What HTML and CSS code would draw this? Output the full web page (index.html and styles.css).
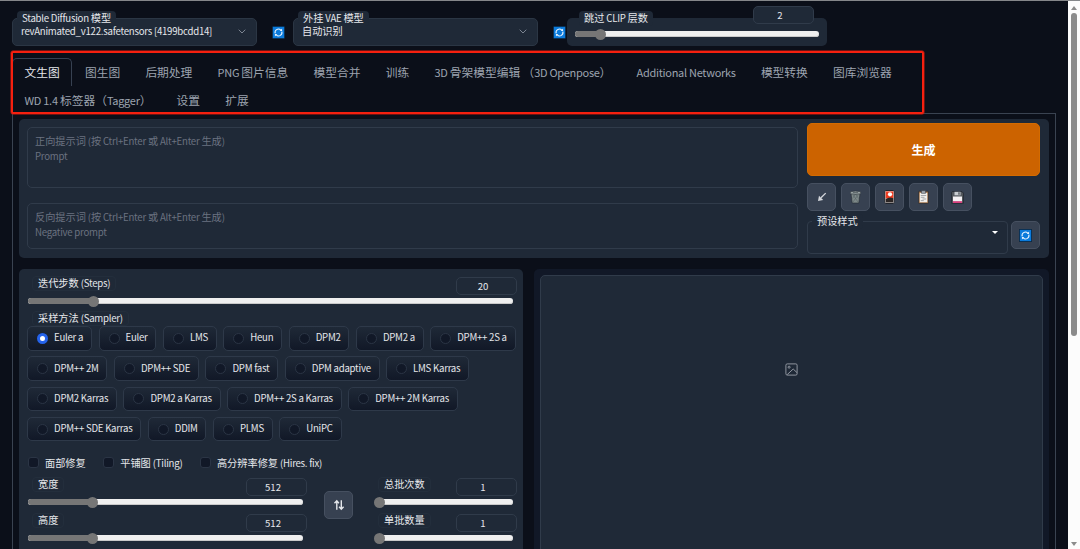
FILE: index.html
```html
<!DOCTYPE html>
<html lang="zh-CN">
<head>
<meta charset="utf-8">
<title>Stable Diffusion</title>
<link rel="stylesheet" href="styles.css">
</head>
<body>
<svg class="defs" width="0" height="0">
  <symbol id="sync" viewBox="0 0 13 13">
    <rect width="13" height="13" rx=".8" fill="#0a2136"/>
    <rect x=".8" y=".8" width="11.4" height="11.4" fill="#0b7bdc"/>
    <path d="M3.2 7.4A3.4 3.4 0 0 1 8.7 3.9M9.8 5.6A3.4 3.4 0 0 1 4.3 9.1" fill="none" stroke="#e9f5ff" stroke-width="1.1"/>
    <path d="M7.6 5.1h2.5V2.6zM5.4 7.9H2.9v2.5z" fill="#e9f5ff"/>
  </symbol>
  <symbol id="chev" viewBox="0 0 8 5"><path d="M.7.7 4 4 7.300.7" fill="none" stroke="#7d8592" stroke-width="1"/></symbol>
</svg>
<div class="app">
  <header class="quick">
    <div class="select">
      <span class="tag"><b>Stable Diffusion </b>模型</span>
      <span class="value"><b>revAnimated_v122.safetensors [4199bcdd14]</b></span>
      <svg class="chev"><use href="#chev"/></svg>
    </div>
    <svg class="sync"><use href="#sync"/></svg>
    <div class="select">
      <span class="tag">外挂<b> VAE </b>模型</span>
      <span class="value">自动识别</span>
      <svg class="chev"><use href="#chev"/></svg>
    </div>
    <svg class="sync"><use href="#sync"/></svg>
    <div class="clip">
      <span class="tag">跳过<b> CLIP </b>层数</span>
      <span class="num">2</span>
      <div class="slider"><i class="fill" style="width:26px"></i></div>
    </div>
  </header>

  <nav class="tabs">
    <a class="tab active">文生图</a><a class="tab">图生图</a><a class="tab">后期处理</a><a class="tab"><b>PNG </b>图片信息</a><a class="tab">模型合并</a><a class="tab">训练</a><a class="tab"><b>3D </b>骨架模型编辑<b> </b>（<b>3D Openpose</b>）</a><a class="tab"><b>Additional Networks</b></a><a class="tab">模型转换</a><a class="tab">图库浏览器</a>
    <a class="tab"><b>WD 1.4 </b>标签器（<b>Tagger</b>）</a><a class="tab">设置</a><a class="tab">扩展</a>
    <div class="highlight"></div>
  </nav>

  <main class="page">
    <section class="top">
      <div class="prompts">
        <div class="area pos">正向提示词<b> (</b>按<b> Ctrl+Enter </b>或<b> Alt+Enter </b>生成<b>)</b><br><b>Prompt</b></div>
        <div class="area neg">反向提示词<b> (</b>按<b> Ctrl+Enter </b>或<b> Alt+Enter </b>生成<b>)</b><br><b>Negative prompt</b></div>
      </div>
      <div class="actions">
        <button class="generate">生成</button>
        <div class="tools">
          <button class="tool"><svg width="12" height="12" viewBox="0 0 12 12"><path d="M9.700 2.100 5 6.800" stroke="#d4d7dc" stroke-width="1.300"/><path d="M2 10 3 4.800 7.200 9z" fill="#d4d7dc"/></svg></button>
          <button class="tool"><svg width="13" height="14" viewBox="0 0 13 14"><path d="M2 3.500h9L9.800 13H3.200z" fill="#7d8888" stroke="#252c32" stroke-width=".6"/><path d="M4 5l5 7M6.500 4l3 4.500M9 5l-5 7M6.500 4l-3 4.500" stroke="#566164" stroke-width=".6"/><ellipse cx="6.500" cy="2.700" rx="5.500" ry="1.600" fill="#98a2a2" stroke="#252c32" stroke-width=".6"/><path d="M4 2.600h5" stroke="#4d5759" stroke-width=".8"/></svg></button>
          <button class="tool"><svg width="11" height="14" viewBox="0 0 11 14"><rect x=".8" y=".5" width="9.400" height="13" rx="1.200" fill="#f1e8e4" stroke="#20252d"/><path d="M1.700 1.400h7.600v7H1.700z" fill="#ef3b20"/><circle cx="6" cy="4.300" r="2.100" fill="#fff"/><path d="M1.700 9Q5.500 6.200 9.300 8.300v4.300H1.700z" fill="#2b2524"/></svg></button>
          <button class="tool"><svg width="11" height="14" viewBox="0 0 11 14"><rect x=".5" y="1.200" width="10" height="12.300" rx=".8" fill="#9b6d45" stroke="#242a32" stroke-width=".7"/><path d="M1.700 2.800h7.600v9.500H1.700z" fill="#f1efeb"/><path d="M3.500.6h4v2.800h-4z" fill="#9da5ac" stroke="#343a42" stroke-width=".5"/><path d="M2.800 5.500h5.400M2.800 7.300h3.700M4.500 9h3.700M2.800 10.600h3" stroke="#92969b" stroke-width=".8"/></svg></button>
          <button class="tool"><svg width="13" height="13" viewBox="0 0 13 13"><path d="M1.300.6h9.600l1.500 1.500v10.300H.6V1.300z" fill="#55595e" stroke="#20252d" stroke-width=".8"/><path d="M3.500.8h6v3.500h-6z" fill="#c9cdd1"/><path d="M7.400 1.300h1.200v2.400H7.400z" fill="#44484d"/><path d="M2 5.500h9v5H2z" fill="#f5f2f4"/><path d="M2 10.300h9v1.600H2z" fill="#ea3e83"/></svg></button>
        </div>
        <div class="styles">
          <div class="preset"><span class="tag">预设样式</span><i class="caret"></i></div>
          <button class="tool"><svg class="sync"><use href="#sync"/></svg></button>
        </div>
      </div>
    </section>

    <div class="columns">
      <section class="settings">
        <div class="field steps">
          <div class="head"><span class="label">迭代步数<b> (Steps)</b></span><span class="num">20</span></div>
          <div class="slider"><i class="fill" style="width:66px"></i></div>
        </div>
        <div class="sampler"><span class="label">采样方法<b> (Sampler)</b></span></div>
        <div class="radios">
          <div class="row"><label class="radio on"><i></i><b>Euler a</b></label><label class="radio"><i></i><b>Euler</b></label><label class="radio"><i></i><b>LMS</b></label><label class="radio"><i></i><b>Heun</b></label><label class="radio"><i></i><b>DPM2</b></label><label class="radio"><i></i><b>DPM2 a</b></label><label class="radio"><i></i><b>DPM++ 2S a</b></label></div>
          <div class="row"><label class="radio"><i></i><b>DPM++ 2M</b></label><label class="radio"><i></i><b>DPM++ SDE</b></label><label class="radio"><i></i><b>DPM fast</b></label><label class="radio"><i></i><b>DPM adaptive</b></label><label class="radio"><i></i><b>LMS Karras</b></label></div>
          <div class="row"><label class="radio"><i></i><b>DPM2 Karras</b></label><label class="radio"><i></i><b>DPM2 a Karras</b></label><label class="radio"><i></i><b>DPM++ 2S a Karras</b></label><label class="radio"><i></i><b>DPM++ 2M Karras</b></label></div>
          <div class="row"><label class="radio"><i></i><b>DPM++ SDE Karras</b></label><label class="radio"><i></i><b>DDIM</b></label><label class="radio"><i></i><b>PLMS</b></label><label class="radio"><i></i><b>UniPC</b></label></div>
        </div>
        <div class="checks"><label><i></i>面部修复</label><label><i></i><span>平铺图<b> (Tiling)</b></span></label><label><i></i><span>高分辨率修复<b> (Hires. fix)</b></span></label></div>
        <div class="dims">
          <div class="wide">
            <div class="field"><div class="head"><span class="label">宽度</span><span class="num">512</span></div><div class="slider"><i class="fill" style="width:65px"></i></div></div>
            <div class="field"><div class="head"><span class="label">高度</span><span class="num">512</span></div><div class="slider"><i class="fill" style="width:65px"></i></div></div>
          </div>
          <button class="tool swap"><svg width="12" height="12" viewBox="0 0 12 12" fill="none" stroke="#e5e7eb" stroke-width="1.400"><path d="M3.800 10.700V2M1.500 4.300l2.300-2.500 2.100 2.500M8.300 1.300V10M6.100 7.700l2.200 2.500 2.300-2.500"/></svg></button>
          <div class="narrow">
            <div class="field"><div class="head"><span class="label">总批次数</span><span class="num">1</span></div><div class="slider"><i class="fill" style="width:5px"></i></div></div>
            <div class="field"><div class="head"><span class="label">单批数量</span><span class="num">1</span></div><div class="slider"><i class="fill" style="width:5px"></i></div></div>
          </div>
        </div>
      </section>
      <section class="output">
        <div class="gallery"><svg width="13" height="13" viewBox="0 0 13 13" fill="none" stroke="#8f959f" stroke-width="1"><rect x=".9" y=".9" width="11.200" height="11.200" rx="1.300"/><circle cx="4.100" cy="4.200" r="1"/><path d="M2.200 11.600 8.200 6l3.900 3.700"/></svg></div>
      </section>
    </div>
  </main>
</div>
<aside class="scrollbar"><i class="up"></i><i class="thumb"></i><i class="down"></i></aside>
</body>
</html>
```
FILE: styles.css
```css
* { box-sizing: border-box; }
body {
  margin: 0;
  width: 1080px;
  height: 549px;
  overflow: hidden;
  display: flex;
  background: #0b0f19;
  border-top: 1px solid #85878a;
  font: 10.2px/14px "Noto Sans CJK SC", sans-serif;
  color: #e5e7eb;
}
button { padding: 0; font: inherit; color: inherit; }
/* Latin runs are set slightly smaller and tighter than the Chinese text around them */
b { font-size: .945em; letter-spacing: -.025em; font-weight: inherit; line-height: 1; white-space: pre; }
.defs { position: absolute; }
.app { width: 1068px; height: 548px; padding-left: 12px; overflow: hidden; }

.quick { display: flex; height: 50px; padding-top: 17px; }
.select {
  position: relative;
  width: 245px;
  height: 28px;
  padding: 5px 10px 0 8px;
  display: flex;
  justify-content: space-between;
  background: #1f2937;
  border: 1px solid #2b3644;
  border-radius: 5px;
}
.value { line-height: 14px; white-space: nowrap; }
.chev { width: 8px; height: 5px; margin-top: 5px; }
.sync { width: 13px; height: 13px; flex: none; }
.quick > .sync { margin: 8px 8px 0 15px; }
.quick > .sync:nth-of-type(2) { margin-right: 1px; }
.tag {
  position: absolute;
  left: 4px;
  top: -8px;
  height: 15px;
  padding: 0 5px;
  line-height: 14px;
  white-space: nowrap;
  background: #1f2937;
  border-radius: 4px;
}
.clip {
  position: relative;
  width: 260px;
  height: 28px;
  padding: 13px 8px 0;
  background: #1f2937;
  border-radius: 5px;
}
.clip .tag { left: 12px; top: -7px; }
.clip .num { position: absolute; left: 186px; top: -12px; }
.num {
  width: 61px;
  height: 18px;
  padding-right: 7px;
  line-height: 16px;
  text-align: center;
  font-size: 9.600px;
  background: #1f2937;
  border: 1px solid #303b4a;
  border-radius: 5px;
}
.slider { height: 6px; border-radius: 3px; background: #efefef; box-shadow: inset 0 -1px #c9c9c9; }
.fill { position: relative; display: block; height: 6px; border-radius: 3px; background: #767676; }
.fill::after {
  content: "";
  position: absolute;
  right: -5px;
  top: -2.500px;
  width: 11px;
  height: 11px;
  border-radius: 50%;
  background: #767676;
}

.tabs {
  position: relative;
  display: flex;
  flex-wrap: wrap;
  align-content: flex-start;
  width: 911px;
  height: 62px;
  padding-top: 7px;
}
.tab {
  height: 27.500px;
  padding: 0 11.700px 0 11.500px;
  border: 1px solid transparent;
  border-bottom: 0;
  font-size: 11.75px;
  line-height: 25px;
  color: #9ca3af;
  white-space: nowrap;
}
.tab b { font-size: .935em; }
.tab.active { color: #e5e7eb; border-color: #374151; border-radius: 5px 5px 0 0; }
.highlight {
  position: absolute;
  left: -1px;
  top: 0;
  width: 913px;
  height: 63px;
  border: 2px solid #f6200f;
  border-radius: 2px;
  box-shadow: 0 0 0 .5px #c41a10;
}

.page { width: 1044px; height: 440px; padding: 5px 6px 0; border: 1px solid #3a4351; border-bottom: 0; }
.top { display: flex; gap: 9px; height: 139px; padding: 4px 9px 0 8px; background: #1f2937; border-radius: 5px; }
.prompts { width: 771px; padding-top: 4px; display: flex; flex-direction: column; gap: 15px; }
.area { padding: 5px 7px; border: 1px solid #303b4a; border-radius: 5px; line-height: 15px; color: #6b7280; }
.pos { height: 61px; }
.neg { height: 46px; }
.actions { width: 233px; }
.generate {
  display: block;
  width: 233px;
  height: 53px;
  border: 1px solid #d46b00;
  border-radius: 5px;
  background: #cc6300;
  font-size: 12px;
  font-weight: 700;
  color: #fff;
}
.tools { display: flex; gap: 5px; margin: 7px 0 10px; }
.tool {
  width: 29px;
  height: 28px;
  flex: none;
  display: flex;
  align-items: center;
  justify-content: center;
  background: #374151;
  border: 1px solid #465060;
  border-radius: 5px;
}
.styles { display: flex; gap: 3px; }
.preset { position: relative; width: 201px; height: 33px; border: 1px solid #303b4a; border-radius: 4px; }
.caret {
  position: absolute;
  right: 9px;
  top: 9px;
  border: 3px solid transparent;
  border-top-color: #fff;
  border-bottom: 0;
}

.columns { display: flex; gap: 11px; padding-top: 11px; }
.settings { width: 504px; height: 300px; padding: 8px 6px 0 9px; background: #1f2937; border-radius: 5px; }
.field { height: 36px; }
.head { display: flex; justify-content: space-between; height: 21px; }
.label { display: block; height: 15px; margin: -1px 0 0 4px; padding: 0 5px; line-height: 12px; border: 1px solid #232e3c; border-radius: 4px; white-space: nowrap; }
.field .slider { margin-right: 4px; }
.steps { height: 35px; }
.sampler { display: flex; height: 14px; }
.radios { display: flex; flex-direction: column; gap: 5.800px; margin-left: -1px; }
.row { display: flex; gap: 6.500px; }
.radio {
  height: 24.500px;
  flex: none;
  display: flex;
  align-items: center;
  padding: 0 7.800px 0 9px;
  border: 1px solid #2e3949;
  border-radius: 5px;
  background: linear-gradient(#1f2937, #111827);
  white-space: nowrap;
}
.radio i { width: 11px; height: 11px; margin: 0 6px 0 0; border: 1px solid #2b3545; border-radius: 50%; background: #111827; }
.radio.on i { border: 3.500px solid #2563eb; background: #fff; }
.checks { display: flex; gap: 17.500px; margin-top: 14px; height: 22.700px; }
.checks label { display: flex; height: 15px; align-items: center; white-space: nowrap; }
.checks i { width: 11px; height: 11px; margin-right: 6px; border: 1px solid #2b3545; border-radius: 3px; background: #111827; }
.dims { display: flex; }
.wide { width: 279px; }
.swap { margin: 13px 22px 0 17px; }
.narrow { width: 142px; }
.narrow .label { margin-left: 3px; }
.output { width: 515px; height: 300px; padding: 6px; background: #111827; border-radius: 5px; }
.gallery {
  height: 300px;
  display: flex;
  justify-content: center;
  padding-top: 87px;
  background: #1f2937;
  border: 1px solid #303b4a;
  border-radius: 5px;
}

.scrollbar { width: 12px; height: 548px; display: flex; flex-direction: column; align-items: center; padding-top: 5px; background: #fcfcfc; }
.up, .down { border: 3px solid transparent; }
.up { border-bottom: 4px solid #8b8b8b; border-top: 0; }
.thumb { width: 6px; height: 323px; margin-top: 3px; border-radius: 3px; background: #8b8b8b; }
.down { margin-top: 206px; border-top: 4px solid #8b8b8b; border-bottom: 0; }
```
